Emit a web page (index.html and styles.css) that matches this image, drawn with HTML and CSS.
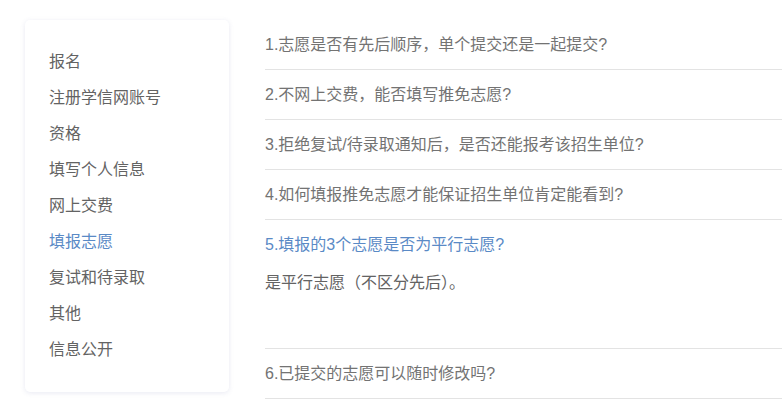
FILE: index.html
```html
<!DOCTYPE html>
<html lang="zh-CN">
<head>
    <meta charset="UTF-8">
    <meta name="viewport" content="width=device-width, initial-scale=1.0">
    <title>常见问题 - 填报志愿</title>
    <link rel="stylesheet" href="styles.css">
</head>
<body>
    <div class="page">
        <!-- 左侧菜单 -->
        <div class="side-menu">
            <ul>
                <li>报名</li>
                <li>注册学信网账号</li>
                <li>资格</li>
                <li>填写个人信息</li>
                <li>网上交费</li>
                <li class="active">填报志愿</li>
                <li>复试和待录取</li>
                <li>其他</li>
                <li>信息公开</li>
            </ul>
        </div>

        <!-- 问题列表 -->
        <div class="faq-list">
            <div class="faq-item">
                <div class="question">1.志愿是否有先后顺序，单个提交还是一起提交?</div>
            </div>
            <div class="faq-item">
                <div class="question">2.不网上交费，能否填写推免志愿?</div>
            </div>
            <div class="faq-item">
                <div class="question">3.拒绝复试/待录取通知后，是否还能报考该招生单位?</div>
            </div>
            <div class="faq-item">
                <div class="question">4.如何填报推免志愿才能保证招生单位肯定能看到?</div>
            </div>
            <div class="faq-item open">
                <div class="question">5.填报的3个志愿是否为平行志愿?</div>
                <div class="answer">是平行志愿（不区分先后）。</div>
            </div>
            <div class="faq-item">
                <div class="question">6.已提交的志愿可以随时修改吗?</div>
            </div>
        </div>
    </div>
</body>
</html>
```

FILE: styles.css
```css
* {
    margin: 0;
    padding: 0;
    box-sizing: border-box;
}
body {
    font-family: 'Liberation Sans', 'Noto Sans CJK SC', sans-serif;
    background-color: #fff;
    color: #666;
    overflow: hidden;
}
.page {
    display: flex;
    align-items: flex-start;
    gap: 36px;
    padding: 20px 0 0 25px;
}
.side-menu {
    width: 204px;
    height: 372px;
    flex-shrink: 0;
    background: white;
    border-radius: 5px;
    box-shadow: 0 1px 5px rgba(90, 100, 160, 0.14);
    padding: 24px 0 24px 24px;
}
.side-menu ul {
    list-style: none;
}
.side-menu li {
    font-size: 16px;
    line-height: 36px;
    height: 36px;
    color: #636363;
    cursor: pointer;
}
.side-menu li.active {
    color: #5a8ac6;
}
.faq-list {
    flex: 1;
}
.faq-item {
    border-bottom: 1px solid #e3e3e3;
}
.question {
    height: 49px;
    line-height: 49px;
    font-size: 16px;
    color: #737373;
    cursor: pointer;
}
.faq-item.open .question {
    color: #5a8ac6;
}
.answer {
    height: 79px;
    padding-top: 2px;
    line-height: 24px;
    font-size: 16px;
    color: #636363;
}
```
